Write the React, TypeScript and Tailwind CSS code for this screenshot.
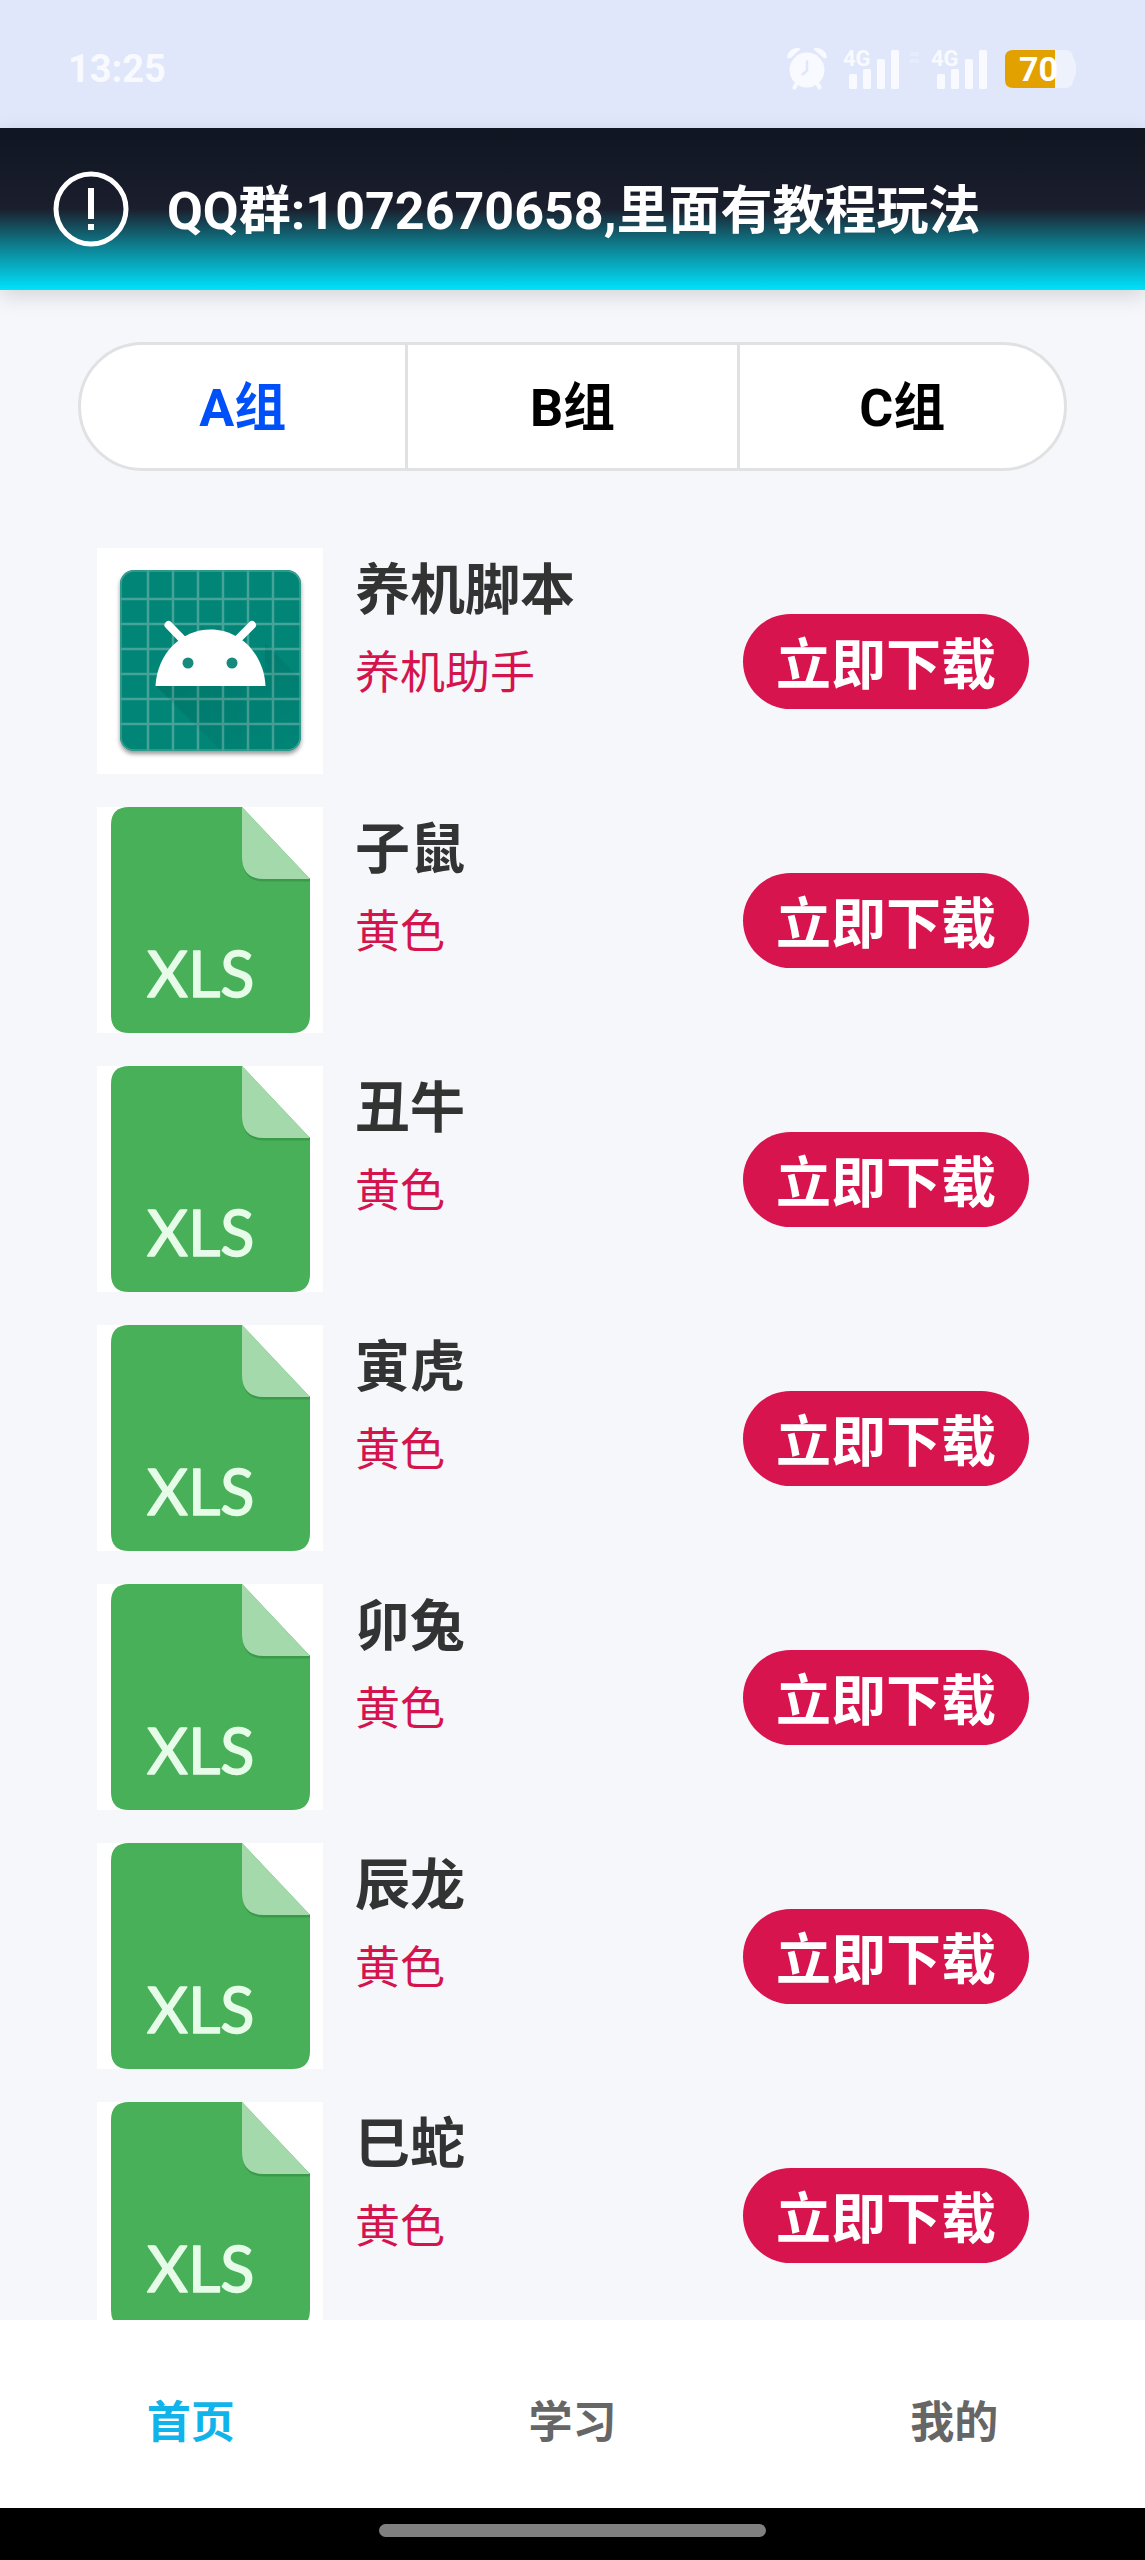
import { useState } from "react";

interface Item {
  name: string;
  desc: string;
  icon: "android" | "xls";
}

const groups = ["A组", "B组", "C组"];
const navs = ["首页", "学习", "我的"];

const items: Item[] = [
  { name: "养机脚本", desc: "养机助手", icon: "android" },
  { name: "子鼠", desc: "黄色", icon: "xls" },
  { name: "丑牛", desc: "黄色", icon: "xls" },
  { name: "寅虎", desc: "黄色", icon: "xls" },
  { name: "卯兔", desc: "黄色", icon: "xls" },
  { name: "辰龙", desc: "黄色", icon: "xls" },
  { name: "巳蛇", desc: "黄色", icon: "xls" },
];

const gridLines = [51, 76, 101, 126, 151, 176];

function AlarmIcon() {
  return (
    <svg width="40" height="42" viewBox="0 0 40 42" fill="none" aria-hidden="true">
      <path d="M1 9.5C1 4 6 0 12.500 1L3 9.500Z M39 9.500C39 4 34 0 27.500 1L37 9.500Z" fill="#f8faff" stroke="#f8faff" strokeWidth="1.500" strokeLinejoin="round" />
      <circle cx="20" cy="22" r="17.500" fill="#f8faff" />
      <path d="M10 35L7.500 39.500M30 35L32.500 39.500" stroke="#f8faff" strokeWidth="4" strokeLinecap="round" />
      <path d="M20 13.500V22.500L15.500 26.500" stroke="#e1e7fa" strokeWidth="2.500" strokeLinecap="round" strokeLinejoin="round" />
    </svg>
  );
}

function SignalIcon() {
  return (
    <div className="relative">
      <span className="absolute left-0 top-0 text-[22px] leading-[20px] font-bold">4G</span>
      <svg width="56" height="41" viewBox="0 0 56 41" fill="#f8faff" aria-hidden="true">
        <rect x="6" y="25" width="8" height="15" rx="1.500" />
        <rect x="20" y="20" width="8" height="20" rx="1.500" />
        <rect x="34" y="10" width="8" height="30" rx="1.500" />
        <rect x="48" y="1" width="8" height="39" rx="1.500" />
      </svg>
    </div>
  );
}

function Battery() {
  return (
    <div className="relative">
      <svg width="72" height="38" viewBox="0 0 72 38" aria-hidden="true">
        <path d="M8 0H61Q67 0 68 7L71 14V24L68 31Q67 38 61 38H8Q0 38 0 30V8Q0 0 8 0Z" fill="#edf2fd" />
        <path d="M8 0H50V38H8Q0 38 0 30V8Q0 0 8 0Z" fill="#e3a100" />
      </svg>
      <span className="absolute left-3.5 top-0 text-[34px] leading-[38px] font-bold text-white">70</span>
    </div>
  );
}

function StatusBar() {
  return (
    <div className="h-32 shrink-0 bg-[#e1e7fa] flex justify-between px-[68px] pt-3 text-[#f8faff]">
      <time className="text-[38px] leading-[114px] font-bold">13:25</time>
      <div className="h-[114px] flex items-center">
        <AlarmIcon />
        <div className="ml-4">
          <SignalIcon />
        </div>
        <svg width="10" height="41" viewBox="0 0 10 41" fill="#e6ecfb" className="mx-[11px]" aria-hidden="true">
          <rect x="0" y="3" width="9" height="4" rx="1" />
          <rect x="0" y="10" width="9" height="4" rx="1" />
        </svg>
        <SignalIcon />
        <div className="ml-[18px]">
          <Battery />
        </div>
      </div>
    </div>
  );
}

function Notice() {
  return (
    <header className="relative z-10 h-[162px] shrink-0 flex items-center gap-[38px] px-[53px] bg-[linear-gradient(180deg,#101522_0%,#1b1f2d_50%,#0e7f90_73%,#00e2fc_100%)] shadow-[0_6px_20px_rgba(0,0,0,0.14)]">
      <svg width="76" height="76" viewBox="0 0 76 76" fill="none" stroke="#fff" className="shrink-0" aria-hidden="true">
        <circle cx="38" cy="38" r="35" strokeWidth="5" />
        <path d="M38 17V48M38 53V59" strokeWidth="6" />
      </svg>
      <h1 className="pt-1.5 text-[52px] leading-[64px] font-bold text-white">QQ群:1072670658,里面有教程玩法</h1>
    </header>
  );
}

function AndroidIcon() {
  return (
    <svg viewBox="0 0 226 226" className="size-[226px] shrink-0 bg-white" aria-hidden="true">
      <defs>
        <filter id="tile-shadow" x="-10%" y="-10%" width="120%" height="125%">
          <feDropShadow dx="0" dy="3" stdDeviation="2" floodColor="#000" floodOpacity="0.4" />
        </filter>
        <linearGradient id="long-shadow" x1="0" y1="0" x2="1" y2="1">
          <stop offset="0" stopColor="#000" stopOpacity="0.12" />
          <stop offset="1" stopColor="#000" stopOpacity="0" />
        </linearGradient>
        <clipPath id="tile">
          <rect x="23" y="22" width="181" height="181" rx="14" />
        </clipPath>
      </defs>
      <rect x="23" y="22" width="181" height="181" rx="14" fill="#008577" filter="url(#tile-shadow)" />
      <g clipPath="url(#tile)">
        {gridLines.map((p) => (
          <path key={p} d={`M${p} 22V203M23 ${p}H204`} stroke="#45a398" strokeWidth="2.500" />
        ))}
        <path d="M59 138H168V95L204 131V203H124Z" fill="url(#long-shadow)" />
      </g>
      <rect x="24" y="23" width="179" height="179" rx="13" fill="none" stroke="#3f9e93" strokeWidth="1.500" />
      <path d="M71.500 77L88 94M155 77L138 94" stroke="#fff" strokeWidth="8" strokeLinecap="round" />
      <path d="M58.500 138C60 106 84 81.500 113.500 81.500S167 106 168.500 138Z" fill="#fff" />
      <circle cx="91" cy="115" r="5.500" fill="#178a7e" />
      <circle cx="135" cy="115" r="5.500" fill="#178a7e" />
    </svg>
  );
}

function XlsIcon() {
  return (
    <svg viewBox="0 0 226 226" className="size-[226px] shrink-0 bg-white" aria-hidden="true">
      <path d="M32 0H145L213 72V208Q213 226 195 226H32Q14 226 14 208V18Q14 0 32 0Z" fill="#48b058" />
      <path d="M145 52Q146 74 166 74.500H213V71H160Z" fill="#3a9a4a" />
      <path d="M145 0L213 72H167Q145 72 145 50Z" fill="#a3d9ab" />
      <text x="50" y="190" fontSize="63" fill="#e6fce8" stroke="#e6fce8" strokeWidth="1.500" strokeLinejoin="round" className="font-[Lato]">
        XLS
      </text>
    </svg>
  );
}

function ItemRow({ item }: { item: Item }) {
  return (
    <li className="flex items-center">
      {item.icon === "android" ? <AndroidIcon /> : <XlsIcon />}
      <div className="flex-1 self-start pl-8 pt-2.5">
        <h2 className="text-[55px] leading-[64px] font-bold text-[#333333]">{item.name}</h2>
        <p className="mt-6 text-[45px] leading-[56px] text-[#d5144e]">{item.desc}</p>
      </div>
      <button className="h-[95px] px-[33px] pt-2 rounded-full bg-[#d7144d] text-white text-[55px] leading-[64px] font-bold">
        立即下载
      </button>
    </li>
  );
}

export default function App() {
  const [group, setGroup] = useState(0);
  const [nav, setNav] = useState(0);

  return (
    <div className="h-screen flex flex-col bg-[#f5f7fb] font-[Roboto,'Noto_Sans_CJK_SC',sans-serif]">
      <StatusBar />
      <Notice />

      <main className="flex-1 min-h-0 overflow-y-auto [scrollbar-width:none] pt-[52px]">
        {/* groups */}
        <div className="mx-[78px] h-[129px] grid grid-cols-3">
          {groups.map((g, i) => (
            <button
              key={g}
              onClick={() => setGroup(i)}
              className={`pt-1 bg-white border-[#e0e1e3] border-y-3 first:border-l-3 first:border-r-3 first:rounded-l-full last:border-l-3 last:border-r-3 last:rounded-r-full text-[52px] leading-[64px] font-bold ${group === i ? "text-[#0050fa]" : "text-black"}`}
            >
              {g}
            </button>
          ))}
        </div>

        {/* downloads */}
        <ul className="mt-[77px] pl-[97px] pr-[116px] flex flex-col gap-[33px]">
          {items.map((item) => (
            <ItemRow key={item.name} item={item} />
          ))}
        </ul>
      </main>

      <nav className="h-[188px] shrink-0 bg-white flex pt-[18px]">
        {navs.map((n, i) => (
          <button
            key={n}
            onClick={() => setNav(i)}
            className={`flex-1 text-[44px] leading-[56px] font-bold ${nav === i ? "text-[#10b3ea]" : "text-[#666666]"}`}
          >
            {n}
          </button>
        ))}
      </nav>

      <div className="h-[52px] shrink-0 bg-black flex justify-center items-start pt-4">
        <div className="w-[387px] h-[13px] rounded-full bg-[#808080]" />
      </div>
    </div>
  );
}
